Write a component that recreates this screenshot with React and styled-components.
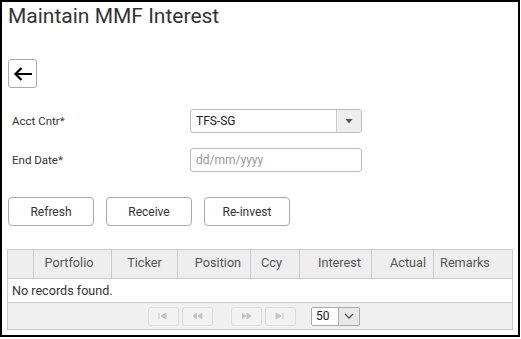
import React from 'react';
import styled, { createGlobalStyle } from 'styled-components';

const GlobalStyle = createGlobalStyle`
  html, body {
    margin: 0;
    padding: 0;
    background: #fff;
  }
  body {
    font-family: Roboto, "Liberation Sans", Arial, sans-serif;
    color: #333;
  }
`;

const Frame = styled.div`
  width: 520px;
  height: 337px;
  box-sizing: border-box;
  border: 2px solid #000;
  padding: 2px 0 0 6px;
  overflow: hidden;
`;

const Title = styled.h1`
  margin: 0;
  font-size: 21px;
  line-height: 25px;
  font-weight: 400;
  color: #333;
`;

const BackButton = styled.button`
  display: flex;
  align-items: center;
  justify-content: center;
  width: 29px;
  height: 29px;
  margin-top: 30px;
  padding: 0;
  background: #fff;
  border: 1px solid #aaa;
  border-radius: 3px;
`;

const Form = styled.div`
  display: grid;
  grid-template-columns: 178px 172px;
  row-gap: 15px;
  margin-top: 21px;
  padding-left: 4px;
  align-items: center;
`;

const Label = styled.label`
  font-size: 11.5px;
  color: #333;
`;

const Field = styled.div`
  display: flex;
  height: 24px;
  box-sizing: border-box;
  border: 1px solid #bbb;
  border-radius: 3px;
  background: #fff;
  overflow: hidden;
`;

const FieldText = styled.span`
  flex: 1;
  display: flex;
  align-items: center;
  padding-left: 5px;
  font-size: 12px;
  color: ${p => (p.$placeholder ? '#999' : '#222')};
`;

const DropTrigger = styled.span`
  width: 24px;
  display: flex;
  align-items: center;
  justify-content: center;
  background: #eee;
  border-left: 1px solid #ccc;
`;

const Actions = styled.div`
  display: flex;
  gap: 12px;
  margin-top: 25px;
`;

const ActionButton = styled.button`
  width: 86px;
  height: 29px;
  padding: 0;
  background: #fff;
  border: 1px solid #aaa;
  border-radius: 4px;
  font-family: inherit;
  font-size: 12px;
  color: #333;
`;

const Table = styled.div`
  width: 506px;
  margin-top: 23px;
  margin-left: -1px;
  border: 1px solid #ccc;
  box-sizing: border-box;
`;

const HeaderRow = styled.div`
  display: grid;
  grid-template-columns: 25px 78px 66px 73px 49px 72px 62px 1fr;
  height: 28px;
  background: #eee;
  border-bottom: 1px solid #ccc;
`;

const HeaderCell = styled.div`
  display: flex;
  align-items: center;
  justify-content: center;
  font-size: 12.7px;
  color: #555;
  border-left: ${p => (p.$first ? 'none' : '1px solid #ccc')};
  padding-bottom: 4px;
  padding-left: ${p => Math.max(p.$shift, 0) * 2}px;
  padding-right: ${p => Math.max(-p.$shift, 0) * 2}px;
`;

const EmptyRow = styled.div`
  height: 23px;
  display: flex;
  align-items: center;
  padding-left: 4px;
  font-size: 12.6px;
  color: #333;
  border-bottom: 1px solid #ccc;
`;

const Pager = styled.div`
  height: 26px;
  display: flex;
  align-items: center;
  padding-left: 140px;
  background: #f0f0f0;
`;

const PageButton = styled.span`
  width: 31px;
  height: 19px;
  box-sizing: border-box;
  display: flex;
  align-items: center;
  justify-content: center;
  border: 1px solid #ddd;
  border-radius: 3px;
  margin-right: ${p => p.$gap ?? 3}px;
  background: #f2f2f2;
`;

const PageSize = styled.div`
  display: flex;
  width: 49px;
  height: 19px;
  box-sizing: border-box;
  border: 1px solid #aaa;
  border-radius: 2px;
  background: #fff;
  margin-left: 15px;
  overflow: hidden;
`;

const PageSizeValue = styled.span`
  flex: 1;
  font-size: 12px;
  line-height: 17px;
  padding-left: 4px;
  color: #222;
`;

const PageSizeTrigger = styled.span`
  width: 20px;
  display: flex;
  align-items: center;
  justify-content: center;
  background: #e8e8e8;
  border-left: 1px solid #aaa;
`;

// header label and how far its text sits off the column centre
const columns = [
  ['', 0],
  ['Portfolio', -3.5],
  ['Ticker', 0],
  ['Position', 4],
  ['Ccy', -3.5],
  ['Interest', 4],
  ['Actual', 5.5],
  ['Remarks', -8],
];

const PagerIcon = ({ kind }) => {
  const paths = {
    first: 'M1 2v6 M8 2L3 5l5 3z',
    prev: 'M5 2L1 5l4 3 M10 2L6 5l4 3z',
    next: 'M1 2l4 3-4 3 M6 2l4 3-4 3z',
    last: 'M1 2l5 3-5 3z M8 2v6',
  };
  return (
    <svg width="11" height="10" viewBox="0 0 11 10">
      <path d={paths[kind]} stroke="#c4c4c4" strokeWidth="1" fill="#c4c4c4" />
    </svg>
  );
};

export default function App() {
  return (
    <>
      <GlobalStyle />
      <Frame>
        <Title>Maintain MMF Interest</Title>
        <BackButton aria-label="Back">
          <svg width="20" height="16" viewBox="0 0 20 16">
            <path d="M19 8H2.5 M8.5 2L2.5 8l6 6" stroke="#000" strokeWidth="2.2" fill="none" />
          </svg>
        </BackButton>

        <Form>
          <Label>Acct Cntr*</Label>
          <Field>
            <FieldText>TFS-SG</FieldText>
            <DropTrigger>
              <svg width="8" height="5" viewBox="0 0 8 5">
                <path d="M0.5 0h7L4 4.5z" fill="#555" />
              </svg>
            </DropTrigger>
          </Field>
          <Label>End Date*</Label>
          <Field>
            <FieldText $placeholder>dd/mm/yyyy</FieldText>
          </Field>
        </Form>

        <Actions>
          <ActionButton>Refresh</ActionButton>
          <ActionButton>Receive</ActionButton>
          <ActionButton>Re-invest</ActionButton>
        </Actions>

        <Table>
          <HeaderRow>
            {columns.map(([label, shift], i) => (
              <HeaderCell key={i} $first={i === 0} $shift={shift}>{label}</HeaderCell>
            ))}
          </HeaderRow>
          <EmptyRow>No records found.</EmptyRow>
          <Pager>
            <PageButton><PagerIcon kind="first" /></PageButton>
            <PageButton $gap={18}><PagerIcon kind="prev" /></PageButton>
            <PageButton><PagerIcon kind="next" /></PageButton>
            <PageButton $gap={0}><PagerIcon kind="last" /></PageButton>
            <PageSize>
              <PageSizeValue>50</PageSizeValue>
              <PageSizeTrigger>
                <svg width="10" height="6" viewBox="0 0 10 6">
                  <path d="M1 1l4 4 4-4" stroke="#555" strokeWidth="1.3" fill="none" />
                </svg>
              </PageSizeTrigger>
            </PageSize>
          </Pager>
        </Table>
      </Frame>
    </>
  );
}
